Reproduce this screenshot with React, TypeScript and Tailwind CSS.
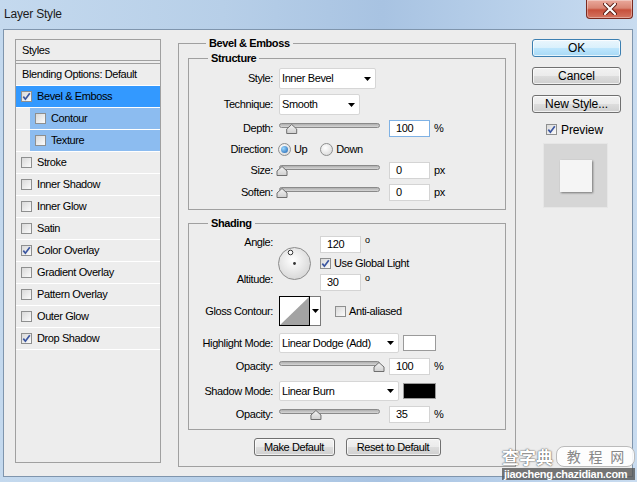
import React from "react";

const font = "font-['Liberation_Sans',Arial,sans-serif]";

function Check({ checked }: { checked?: boolean }) {
  return (
    <span className="w-[11px] h-[11px] shrink-0 border border-[#8e8f8f] bg-[linear-gradient(135deg,#d9d9d9,#fbfbfb)] flex items-center justify-center">
      {checked && (
        <svg width="9" height="9" viewBox="0 0 9 9">
          <path d="M1.3 4.6 L3.4 7.2 L7.8 1.2" stroke="#3b56a0" strokeWidth="1.7" fill="none" />
        </svg>
      )}
    </span>
  );
}

function Radio({ on }: { on?: boolean }) {
  return (
    <span className="w-[13px] h-[13px] shrink-0 rounded-full border border-[#8e8f8f] bg-[radial-gradient(circle_at_40%_35%,#ffffff,#d3d3d3)] flex items-center justify-center">
      {on && <span className="w-[7px] h-[7px] rounded-full bg-[radial-gradient(circle_at_35%_35%,#9ad8ff,#1a5fae)]" />}
    </span>
  );
}

function Arrow() {
  return (
    <svg width="7" height="4" viewBox="0 0 7 4">
      <path d="M0 0 H7 L3.5 4 Z" fill="#000" />
    </svg>
  );
}

function Select({ value, w, h = 21 }: { value: string; w: number; h?: number }) {
  return (
    <span
      className="bg-white border border-[#d6d6d6] rounded-[2px] flex items-center justify-between pl-[2px] pr-[4px]"
      style={{ width: w, height: h }}
    >
      <span>{value}</span>
      <Arrow />
    </span>
  );
}

function Field({ value, focus }: { value: string; focus?: boolean }) {
  return (
    <span
      className={
        "w-[41px] h-[17px] bg-white border flex items-center pl-[6px] " +
        (focus ? "border-[#7fb2e5]" : "border-[#d4d4d4]")
      }
    >
      {value}
    </span>
  );
}

function Slider({ pct }: { pct: number }) {
  const cx = 3 + pct * 97;
  return (
    <svg width="104" height="11" className="overflow-visible shrink-0">
      <defs>
        <linearGradient id="trk" x1="0" y1="0" x2="0" y2="1">
          <stop offset="0" stopColor="#a9a9a9" />
          <stop offset="1" stopColor="#dcdcdc" />
        </linearGradient>
        <linearGradient id="thm" x1="0" y1="0" x2="0" y2="1">
          <stop offset="0" stopColor="#f4f4f4" />
          <stop offset="1" stopColor="#cfcfcf" />
        </linearGradient>
      </defs>
      <rect x="0.5" y="0.5" width="100" height="4" rx="2" fill="url(#trk)" stroke="#8a8a8a" />
      <path
        d={`M${cx - 5} 10.5 V6 L${cx} 1.5 L${cx + 5} 6 V10.5 Z`}
        fill="url(#thm)"
        stroke="#6e6e6e"
        strokeLinejoin="round"
      />
    </svg>
  );
}

function WinButton({ label, w, primary }: { label: string; w: number; primary?: boolean }) {
  return (
    <span
      className={
        "h-[18px] rounded-[3px] border flex items-center justify-center shadow-[inset_0_0_0_1px_rgba(255,255,255,0.7)] " +
        (primary
          ? "border-[#3c7fb1] bg-[linear-gradient(#eaf6fd_0%,#d9f0fc_50%,#bee6fd_51%,#a7d9f5_100%)]"
          : "border-[#707070] bg-[linear-gradient(#f2f2f2_0%,#ebebeb_50%,#dddddd_51%,#cfcfcf_100%)]")
      }
      style={{ width: w }}
    >
      {label}
    </span>
  );
}

function Label({ children }: { children: React.ReactNode }) {
  return <span className="w-[84px] shrink-0 text-right mr-[6px]">{children}</span>;
}

const styleRows: { name: string; checked?: boolean; sub?: boolean; selected?: boolean }[] = [
  { name: "Bevel & Emboss", checked: true, selected: true },
  { name: "Contour", sub: true },
  { name: "Texture", sub: true },
  { name: "Stroke" },
  { name: "Inner Shadow" },
  { name: "Inner Glow" },
  { name: "Satin" },
  { name: "Color Overlay", checked: true },
  { name: "Gradient Overlay" },
  { name: "Pattern Overlay" },
  { name: "Outer Glow" },
  { name: "Drop Shadow", checked: true },
];

function StylesList() {
  return (
    <div className="w-[146px] h-[424px] mt-[2px] shrink-0 border border-[#a0a0a0] flex flex-col">
      <div className="h-[21px] border-b border-[#a0a0a0] flex items-center pl-[6px]">Styles</div>
      <div className="h-[3px] border-b border-[#a0a0a0]" />
      <div className="h-[22px] border-b border-white flex items-center pl-[6px]">Blending Options: Default</div>
      {styleRows.map((r) => (
        <div key={r.name} className="h-[22px] border-b border-white flex">
          <div
            className={
              "flex-1 flex items-center gap-[5px] pl-[5px] " +
              (r.sub ? "ml-[14px] bg-[#8cbcf0]" : "") +
              (r.selected ? " bg-[#3399ff]" : "")
            }
          >
            <Check checked={r.checked} />
            <span>{r.name}</span>
          </div>
        </div>
      ))}
    </div>
  );
}

function Structure() {
  return (
    <fieldset className="mt-[2px] border border-[#a0a0a0] pb-[7px]">
      <legend className="ml-[19px] px-[3px] font-bold leading-[13px]">Structure</legend>
      <div className="h-[27px] flex items-center">
        <Label>Style:</Label>
        <Select value="Inner Bevel" w={97} />
      </div>
      <div className="h-[25px] flex items-center">
        <Label>Technique:</Label>
        <Select value="Smooth" w={81} />
      </div>
      <div className="h-[23px] flex items-center">
        <Label>Depth:</Label>
        <Slider pct={0.1} />
        <span className="ml-[6px]">
          <Field value="100" focus />
        </span>
        <span className="ml-[4px]">%</span>
      </div>
      <div className="h-[18px] flex items-center">
        <Label>Direction:</Label>
        <span className="-ml-[1px] flex items-center gap-[3px]">
          <Radio on />
          <span>Up</span>
        </span>
        <span className="ml-[13px] flex items-center gap-[3px]">
          <Radio />
          <span>Down</span>
        </span>
      </div>
      <div className="h-[25px] flex items-center">
        <Label>Size:</Label>
        <Slider pct={0} />
        <span className="ml-[6px]">
          <Field value="0" />
        </span>
        <span className="ml-[4px]">px</span>
      </div>
      <div className="h-[19px] flex items-center">
        <Label>Soften:</Label>
        <Slider pct={0} />
        <span className="ml-[6px]">
          <Field value="0" />
        </span>
        <span className="ml-[4px]">px</span>
      </div>
    </fieldset>
  );
}

function Dial() {
  return (
    <svg width="33" height="33" className="shrink-0">
      <defs>
        <radialGradient id="dial" cx="0.45" cy="0.4" r="0.6">
          <stop offset="0" stopColor="#ffffff" />
          <stop offset="1" stopColor="#d8d8d8" />
        </radialGradient>
      </defs>
      <circle cx="16.5" cy="16.5" r="16" fill="url(#dial)" stroke="#8c8c8c" />
      <circle cx="16.5" cy="16.5" r="1.4" fill="#333" />
      <circle cx="12.5" cy="5.5" r="2.3" fill="#fff" stroke="#333" />
    </svg>
  );
}

function Shading() {
  return (
    <fieldset className="mt-[7px] border border-[#a0a0a0] pb-[9px]">
      <legend className="ml-[19px] px-[3px] font-bold leading-[13px]">Shading</legend>
      <div className="h-[64px] flex">
        <div className="w-[84px] mr-[6px] flex flex-col items-end">
          <span className="mt-[6px] leading-[13px]">Angle:</span>
          <span className="mt-[24px] leading-[13px]">Altitude:</span>
        </div>
        <div className="mt-[17px] -ml-[1px]">
          <Dial />
        </div>
        <div className="ml-[9px] flex flex-col">
          <span className="mt-[6px] flex items-start">
            <Field value="120" />
            <span className="ml-[4px] text-[9px] leading-[9px]">o</span>
          </span>
          <span className="mt-[4px] h-[13px] flex items-center gap-[3px]">
            <Check checked />
            <span>Use Global Light</span>
          </span>
          <span className="mt-[4px] flex items-start">
            <Field value="30" />
            <span className="ml-[4px] text-[9px] leading-[9px]">o</span>
          </span>
        </div>
      </div>
      <div className="h-[34px] flex items-center">
        <Label>Gloss Contour:</Label>
        <span className="flex">
          <span className="w-[31px] h-[30px] border border-black bg-white">
            <svg width="29" height="28" viewBox="0 0 29 28">
              <path d="M0 28 L29 0 L29 28 Z" fill="#a3a3a3" />
            </svg>
          </span>
          <span className="w-[11px] h-[30px] border border-l-0 border-[#7a7a7a] bg-white flex items-center justify-center">
            <Arrow />
          </span>
        </span>
        <span className="ml-[14px] flex items-center gap-[3px]">
          <Check />
          <span>Anti-aliased</span>
        </span>
      </div>
      <div className="h-[30px] flex items-center">
        <Label>Highlight Mode:</Label>
        <Select value="Linear Dodge (Add)" w={120} h={20} />
        <span className="ml-[4px] w-[33px] h-[16px] bg-white border border-[#9a9a9a]" />
      </div>
      <div className="h-[16px] flex items-center">
        <Label>Opacity:</Label>
        <Slider pct={1} />
        <span className="ml-[6px]">
          <Field value="100" />
        </span>
        <span className="ml-[4px]">%</span>
      </div>
      <div className="h-[34px] flex items-center">
        <Label>Shadow Mode:</Label>
        <Select value="Linear Burn" w={120} h={20} />
        <span className="ml-[4px] w-[33px] h-[16px] bg-black border border-[#9a9a9a]" />
      </div>
      <div className="h-[12px] flex items-center">
        <Label>Opacity:</Label>
        <Slider pct={0.35} />
        <span className="ml-[6px]">
          <Field value="35" />
        </span>
        <span className="ml-[4px]">%</span>
      </div>
    </fieldset>
  );
}

function RightColumn() {
  return (
    <div className="w-[89px] mt-[2px] ml-[16px] flex flex-col text-[12px] tracking-[-0.1px]">
      <WinButton label="OK" w={89} primary />
      <span className="mt-[10px]">
        <WinButton label="Cancel" w={89} />
      </span>
      <span className="mt-[10px]">
        <WinButton label="New Style..." w={89} />
      </span>
      <span className="mt-[10px] h-[13px] pl-[14px] flex items-center gap-[4px]">
        <Check checked />
        <span>Preview</span>
      </span>
      <span className="mt-[7px] ml-[11px] w-[65px] h-[65px] bg-[#d6d6d6] border border-[#e6e6e6] flex items-center justify-center">
        <span className="w-[32px] h-[32px] bg-[#f5f5f5] shadow-[1px_1px_2px_rgba(0,0,0,0.45)]" />
      </span>
    </div>
  );
}

export default function App() {
  return (
    <div
      className={
        font +
        " relative w-[637px] h-[482px] flex flex-col bg-[linear-gradient(90deg,#c4d9ee,#b7cfe8_35%,#a8c3e2_60%,#bcd3ec_85%,#c9dcf0)] text-[11px] tracking-[-0.4px] text-black overflow-hidden"
      }
    >
      <div className="h-[29px] shrink-0 relative flex items-start">
        <span className="mt-[5px] ml-[4px] text-[12px] tracking-[-0.2px] text-[#1b1b1b]">Layer Style</span>
        <span className="absolute left-[586px] top-0 w-[47px] h-[19px] rounded-b-[4px] border border-t-0 border-[#7a2a20] bg-[linear-gradient(#eaa99c_0%,#d98574_45%,#c7503c_55%,#d47562_100%)] flex items-center justify-center shadow-[inset_0_0_0_1px_rgba(255,255,255,0.35)]">
          <svg width="14" height="12" viewBox="0 0 14 12">
            <path d="M2 1 L12 11 M12 1 L2 11" stroke="#5a1d15" strokeWidth="4" strokeLinecap="round" />
            <path d="M2 1 L12 11 M12 1 L2 11" stroke="#fff" strokeWidth="2.2" strokeLinecap="round" />
          </svg>
        </span>
      </div>
      <div className="ml-[3px] w-[630px] h-[448px] border border-[#7f95ad] bg-[#ededed] flex items-start pl-[11px] pt-[7px]">
        <StylesList />
        <fieldset className="ml-[17px] w-[338px] h-[430px] shrink-0 border border-[#a0a0a0] px-[9px]">
          <legend className="ml-[18px] px-[3px] font-bold leading-[13px]">Bevel &amp; Emboss</legend>
          <Structure />
          <Shading />
          <div className="mt-[8px] flex justify-center gap-[11px]">
            <WinButton label="Make Default" w={81} />
            <WinButton label="Reset to Default" w={95} />
          </div>
        </fieldset>
        <RightColumn />
      </div>
      <div className="absolute left-[502px] top-[446px] w-[133px] flex flex-col font-['Noto_Sans_CJK_SC',sans-serif] tracking-normal">
        <div className="flex items-center gap-[3px]">
          <span className="text-[17px] leading-[20px] font-bold text-white [text-shadow:0_0_2px_#555,0_0_1px_#555]">查字典</span>
          <span className="flex-1 h-[21px] rounded-[8px] bg-white/90 border border-[#bbb] flex items-center justify-around px-[6px] text-[14px] text-[#888]">
            <span>教</span>
            <span>程</span>
            <span>网</span>
          </span>
        </div>
        <span className="mt-[1px] bg-[#555]/80 text-white text-[11px] leading-[12px] font-bold font-['Liberation_Sans',sans-serif] tracking-[-0.3px] px-[2px] whitespace-nowrap overflow-hidden">
          jiaocheng.chazidian.com
        </span>
      </div>
    </div>
  );
}
